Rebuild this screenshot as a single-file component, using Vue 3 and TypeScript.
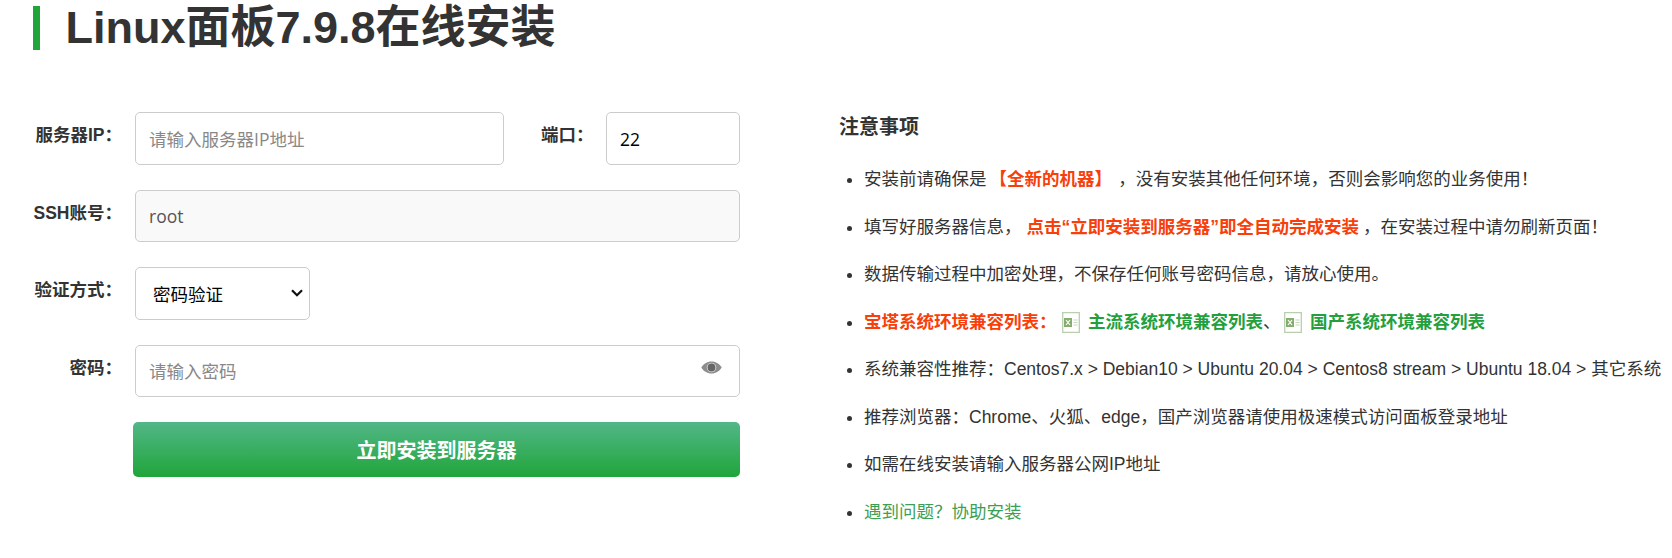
<script setup lang="ts">
const helpText: string = '遇到问题？协助安装';
</script>

<template>
  <div class="page">
    <h1 class="title">Linux面板7.9.8在线安装</h1>
    <div class="columns">
      <form class="form" @submit.prevent>
        <div class="row">
          <label class="label">服务器IP：</label>
          <input class="field ip" placeholder="请输入服务器IP地址" />
          <label class="label port-label">端口：</label>
          <input class="field port" value="22" />
        </div>
        <div class="row">
          <label class="label">SSH账号：</label>
          <input class="field wide readonly" value="root" readonly />
        </div>
        <div class="row">
          <label class="label">验证方式：</label>
          <div class="select-wrap">
            <select class="field select"><option>密码验证</option></select>
            <svg class="chevron" viewBox="0 0 12 8" width="12" height="8">
              <path d="M1 1.200 6 6.300l5-5.100" fill="none" stroke="#111" stroke-width="2.200" />
            </svg>
          </div>
        </div>
        <div class="row">
          <label class="label">密码：</label>
          <div class="pw">
            <input class="field wide" placeholder="请输入密码" />
            <svg class="eye" viewBox="0 0 21 13" width="21" height="13">
              <path d="M10.500 .5C6 .5 2.500 3 .3 6.500 2.500 10 6 12.500 10.500 12.500s8-2.500 10.200-6C18.500 3 15 .5 10.500 .5Z" fill="#8c8c8c" />
              <circle cx="10.500" cy="6.500" r="4.800" fill="#d8d8d8" />
              <circle cx="10.500" cy="6.500" r="3.900" fill="#666" />
            </svg>
          </div>
        </div>
        <button class="submit" type="button">立即安装到服务器</button>
      </form>
      <div class="notes">
        <h2 class="notes-title">注意事项</h2>
        <ul class="list">
          <li>安装前请确保是<b class="red fresh">【全新的机器】</b>，没有安装其他任何环境，否则会影响您的业务使用！</li>
          <li>填写好服务器信息，<b class="red sp">点击“立即安装到服务器”即全自动完成安装</b>，在安装过程中请勿刷新页面！</li>
          <li>数据传输过程中加密处理，不保存任何账号密码信息，请放心使用。</li>
          <li class="compat"><b class="red">宝塔系统环境兼容列表：</b>
            <svg class="xls" viewBox="0 0 18 21" width="18" height="21"><path d="M.7.7h16.600v19.600H.7z" fill="#fff" stroke="#b9cfae" stroke-width="1.300"/><rect x="2" y="6" width="8" height="9" fill="#86ad6e"/><path d="M4 8l4 5M8 8l-4 5" stroke="#fff" stroke-width="1.200"/><path d="M11.500 8h4M11.500 10.500h4M11.500 13h4" stroke="#c3d6b8"/></svg>
            <b class="green">主流系统环境兼容列表</b>、<svg class="xls second" viewBox="0 0 18 21" width="18" height="21"><path d="M.7.7h16.600v19.600H.7z" fill="#fff" stroke="#b9cfae" stroke-width="1.300"/><rect x="2" y="6" width="8" height="9" fill="#86ad6e"/><path d="M4 8l4 5M8 8l-4 5" stroke="#fff" stroke-width="1.200"/><path d="M11.500 8h4M11.500 10.500h4M11.500 13h4" stroke="#c3d6b8"/></svg>
            <b class="green">国产系统环境兼容列表</b></li>
          <li>系统兼容性推荐：Centos7.x &gt; Debian10 &gt; Ubuntu 20.04 &gt; Centos8 stream &gt; Ubuntu 18.04 &gt; 其它系统</li>
          <li>推荐浏览器：Chrome、火狐、edge，国产浏览器请使用极速模式访问面板登录地址</li>
          <li>如需在线安装请输入服务器公网IP地址</li>
          <li><span class="help">{{ helpText }}</span></li>
        </ul>
      </div>
    </div>
  </div>
</template>

<style>
html, body { margin: 0; background: #fff; overflow: hidden; }
</style>

<style scoped>
.page {
  width: 1672px;
  height: 558px;
  box-sizing: border-box;
  padding: 6px 0 0 33px;
  font-family: "Liberation Sans", "Noto Sans CJK SC", sans-serif;
  color: #333;
}
.title {
  margin: 0;
  border-left: 7px solid #20a53a;
  padding-left: 25.500px;
  height: 44px;
  line-height: 44px;
  font-size: 45px;
  font-weight: 700;
}
.columns { display: flex; margin-top: 62px; }
.form { width: 707px; display: flex; flex-direction: column; gap: 25px; }
.row { display: flex; align-items: flex-start; }
.label {
  width: 89px;
  margin-right: 13px;
  text-align: right;
  font-size: 17.500px;
  font-weight: 700;
  line-height: 47px;
  white-space: nowrap;
  flex: none;
}
.field {
  box-sizing: border-box;
  height: 52.500px;
  border: 1px solid #ccc;
  border-radius: 5px;
  padding: 0 13px;
  font: 17.500px "Open Sans", "Noto Sans CJK SC", sans-serif;
  color: #000;
  background: #fff;
  outline: none;
}
.field::placeholder { color: #888; }
.ip { width: 371px; padding-top: 2px; }
.port-label { width: 46px; margin: 0 19px 0 37px; }
.port { width: 134px; padding-top: 2px; }
.wide { width: 605px; }
.readonly { background: #f9f9f9; color: #555; }
.select-wrap { position: relative; }
.select {
  display: block;
  width: 175px;
  padding: 1px 0 0 17px;
  appearance: none;
}
.chevron { position: absolute; left: 156px; top: 22px; }
.pw { position: relative; }
.eye { position: absolute; right: 18px; top: 16px; }
.submit {
  margin-left: 100px;
  width: 607px;
  height: 55px;
  padding-top: 1px;
  border: 0;
  border-radius: 5px;
  background: linear-gradient(#52b788, #20a53a);
  color: #fff;
  font: 700 20px "Liberation Sans", "Noto Sans CJK SC", sans-serif;
}
.notes { padding-left: 99px; padding-top: 1px; width: 840px; flex: none; }
.notes-title { margin: 0; font-size: 20px; line-height: 28px; font-weight: 700; }
.list { margin: 23px 0 0; padding: 0 0 0 25px; font-size: 17.500px; list-style: disc; }
.list li { height: 47.500px; line-height: 30px; white-space: nowrap; }
.red { color: #f83f0b; }
.green { color: #23a03e; }
.fresh { margin: 0 15px 0 3px; }
.sp { margin: 0 4px 0 5px; }
.xls { vertical-align: -5px; margin: 0 8.500px 0 5px; }
.xls.second { margin-left: 3px; }
.help { color: #3d9f55; }
</style>
